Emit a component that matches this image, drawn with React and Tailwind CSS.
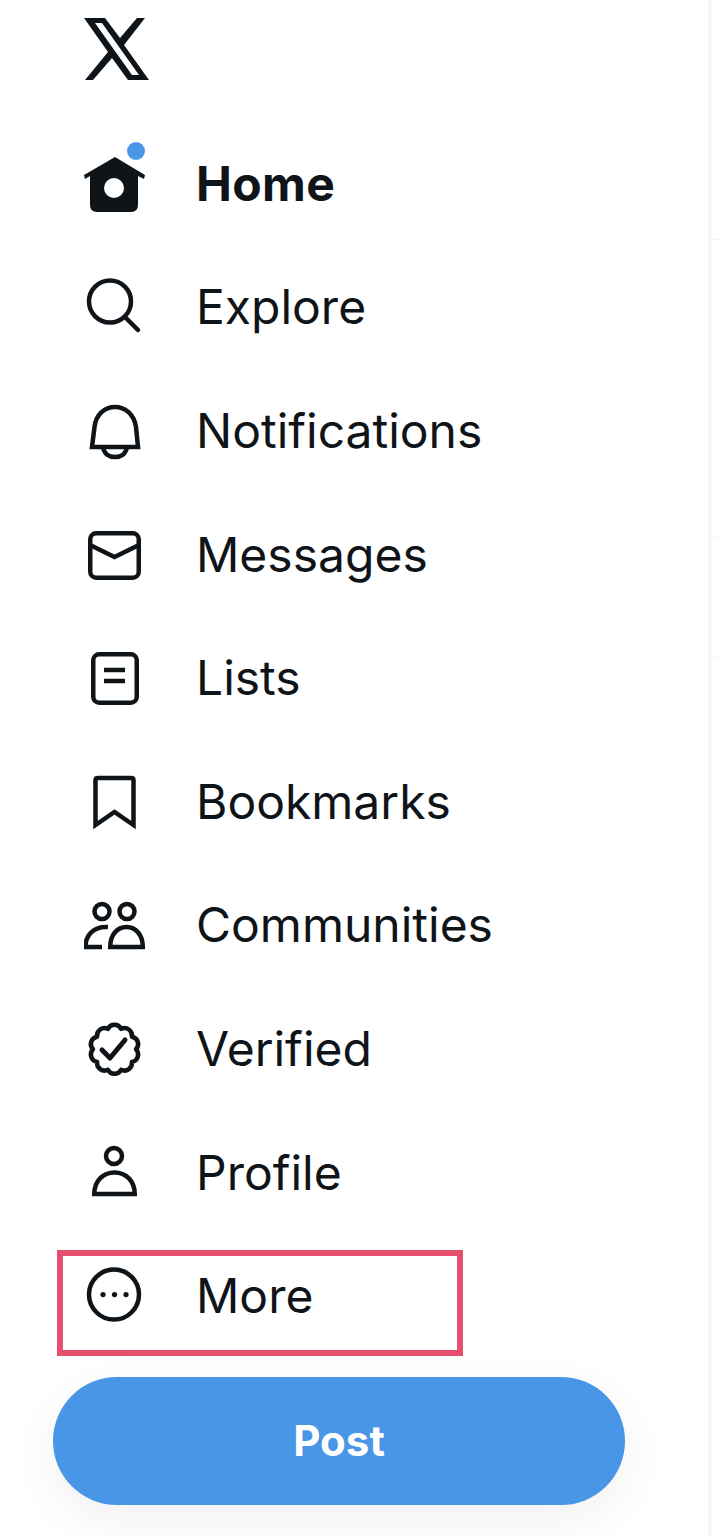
import React from 'react';

const INK = '#0f1419';

const Icon = ({ children }) => (
  <svg viewBox="0 0 68 68" fill="none" stroke={INK} strokeWidth="4.5" className="w-[68px] h-[68px]">
    {children}
  </svg>
);

const HomeIcon = () => (
  <Icon>
    <path
      d="M31 7 L61 25 L60 29 L54 26 L54 55 Q54 62 47 62 L13 62 Q6 62 6 55 L6 26 L1 29 L0 25 Z"
      fill={INK}
      stroke="none"
    />
    <circle cx="30" cy="38" r="10" fill="#fff" stroke="none" />
  </Icon>
);

const SearchIcon = () => (
  <Icon>
    <circle cx="26" cy="28.5" r="21" />
    <path d="M42 45 L54 57" strokeLinecap="round" />
  </Icon>
);

const BellIcon = () => (
  <Icon>
    <path d="M8 50 L10.5 30 C12 17 21 10 31 10 C41 10 50 17 52 30 L54 50 Z" />
    <path d="M19 50 C20 57 25 60 31 60 C37 60 42 57 43 50" />
  </Icon>
);

const MailIcon = () => (
  <Icon>
    <rect x="6.25" y="12.25" width="48.5" height="44.5" rx="6" />
    <path d="M6 24 L30.5 36 L55 24" />
  </Icon>
);

const ListIcon = () => (
  <Icon>
    <rect x="9.25" y="10.25" width="43.5" height="48.5" rx="6" />
    <path d="M20 26 H41 M20 37 H41" />
  </Icon>
);

const BookmarkIcon = () => (
  <Icon>
    <path d="M11.5 12 Q11.5 10 14 10 L47 10 Q49.5 10 49.5 12 L49.5 57 L30.5 44 L11.5 57 Z" />
  </Icon>
);

const CommunitiesIcon = () => (
  <Icon>
    <circle cx="18" cy="20.5" r="7.5" />
    <circle cx="43" cy="20.5" r="7.5" />
    <path d="M24 36 C10 35 1.5 44 1.5 56 L18 56" />
    <path d="M26.2 56 C26.2 44 33 36 42.5 36 C52 36 58.8 44 58.8 56 Z" />
  </Icon>
);

// scalloped badge outline, 10 lobes around the centre
const badgePath = () => {
  const lobes = 10;
  const pts = Array.from({ length: lobes }, (_, i) => {
    const a = ((i + 0.5) * 2 * Math.PI) / lobes - Math.PI / 2;
    return [30.5 + 21.5 * Math.cos(a), 34.3 + 21.5 * Math.sin(a)];
  });
  let d = `M${pts[lobes - 1][0].toFixed(2)} ${pts[lobes - 1][1].toFixed(2)}`;
  pts.forEach(([x, y]) => {
    d += ` A7.5 7.5 0 0 1 ${x.toFixed(2)} ${y.toFixed(2)}`;
  });
  return d + ' Z';
};

const VerifiedIcon = () => (
  <Icon>
    <path d={badgePath()} strokeLinejoin="round" />
    <path d="M18 35 L26 43 L41 25" strokeWidth="5" strokeLinecap="round" strokeLinejoin="round" />
  </Icon>
);

const ProfileIcon = () => (
  <Icon>
    <circle cx="30" cy="17" r="8" />
    <path d="M10.25 55 C10.25 42 19 33.5 30.5 33.5 C42 33.5 50.75 42 50.75 55 Z" />
  </Icon>
);

const MoreIcon = () => (
  <Icon>
    <circle cx="30" cy="32.6" r="25" />
    <circle cx="19" cy="32.6" r="2.6" fill={INK} stroke="none" />
    <circle cx="30.5" cy="32.6" r="2.6" fill={INK} stroke="none" />
    <circle cx="42" cy="32.6" r="2.6" fill={INK} stroke="none" />
  </Icon>
);

const XLogo = () => (
  <svg viewBox="0 0 65 62" className="w-[65px] h-[62px]">
    <path
      fillRule="evenodd"
      fill={INK}
      d="M0 0 L21 0 L36 20 L53 0 L61 0 L40 27 L65 62 L44 62 L28 40 L9 62 L1 62 L24 34 Z M11 5 L48 57 L55 57 L18 5 Z"
    />
  </svg>
);

const items = [
  { label: 'Explore', icon: <SearchIcon /> },
  { label: 'Notifications', icon: <BellIcon /> },
  { label: 'Messages', icon: <MailIcon /> },
  { label: 'Lists', icon: <ListIcon /> },
  { label: 'Bookmarks', icon: <BookmarkIcon /> },
  { label: 'Communities', icon: <CommunitiesIcon /> },
  { label: 'Verified', icon: <VerifiedIcon /> },
  { label: 'Profile', icon: <ProfileIcon /> },
];

const NavRow = ({ icon, label, bold }) => (
  <div className="flex items-center h-[123.6px] gap-[44px]">
    <div className="relative w-[68px] h-[68px] shrink-0">{icon}</div>
    <span className={`text-[48px] leading-none text-[#0f1419] ${bold ? 'font-bold tracking-[0.4px]' : 'font-normal'}`}>
      {label}
    </span>
  </div>
);

export default function App() {
  return (
    <div
      className="relative flex w-[720px] h-[1536px] overflow-hidden bg-white"
      style={{ fontFamily: 'Inter, "Noto Sans", sans-serif' }}
    >
      <div className="flex flex-col w-[708px] pt-[18px] shrink-0">
        <div className="pl-[84px] h-[104px]">
          <XLogo />
        </div>

        <div className="pl-[84px]">
          <div className="relative">
            <NavRow icon={<HomeIcon />} label="Home" bold />
            <span className="absolute left-[43px] top-[20px] w-[18px] h-[18px] rounded-full bg-[#4a96e6]" />
          </div>
          {items.map((item) => (
            <NavRow key={item.label} icon={item.icon} label={item.label} />
          ))}
          <div className="relative">
            <NavRow icon={<MoreIcon />} label="More" />
            <div className="absolute left-[-27px] top-[16px] w-[406px] h-[106px] border-[6px] border-[#e5506f]" />
          </div>
        </div>

        <div className="pl-[53px] pt-[19px]">
          <button className="flex items-center justify-center w-[572px] h-[128px] rounded-full bg-[#4a96e6] text-white text-[42px] font-bold shadow-[0_16px_50px_rgba(0,0,0,0.06)]">
            Post
          </button>
        </div>
      </div>

      <div className="w-[4px] h-full bg-[#f6f6f6] shrink-0" />

      {/* faint separators of the column next to the sidebar */}
      <div className="flex flex-col flex-1">
        <div className="h-[240px] border-b border-[#f5f5f5]" />
        <div className="h-[298px] border-b border-[#f5f5f5]" />
        <div className="h-[120px] border-b border-[#f5f5f5]" />
      </div>
    </div>
  );
}
